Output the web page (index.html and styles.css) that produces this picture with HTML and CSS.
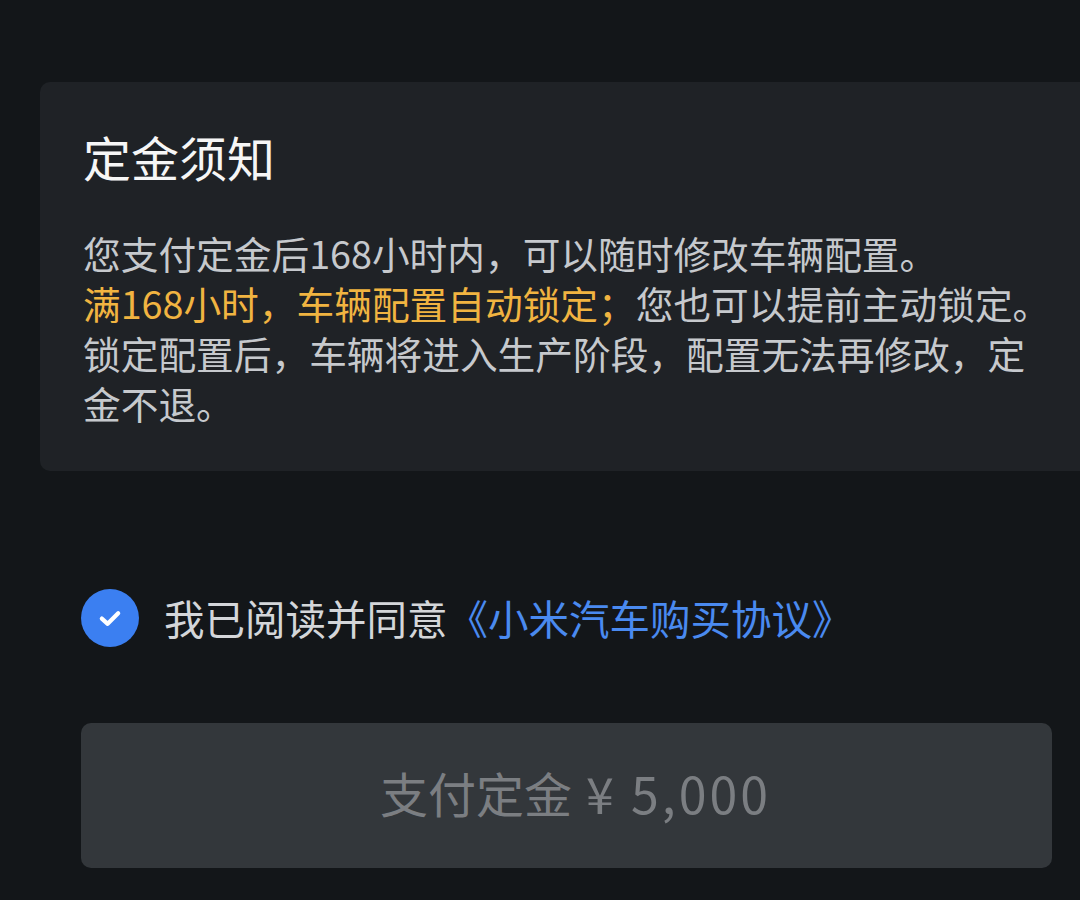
FILE: index.html
```html
<!DOCTYPE html>
<html lang="zh-CN">
<head>
<meta charset="utf-8">
<link rel="stylesheet" href="styles.css">
</head>
<body>
<div class="page">
  <section class="card">
    <h1 class="title">定金须知</h1>
    <p class="notice">您支付定金后168小时内，可以随时修改车辆配置。<br><span class="hl">满168小时，车辆配置自动锁定；</span>您也可以提前主动锁定。<br>锁定配置后，车辆将进入生产阶段，配置无法再修改，定金不退。</p>
  </section>
  <div class="agree">
    <span class="check">
      <svg class="tick" width="28" height="28" viewBox="0 0 24 24"><path d="M5 12.5 L10 17 L19 8" fill="none" stroke="#fff" stroke-width="3.6" stroke-linecap="round" stroke-linejoin="round"/></svg>
    </span>
    <span class="agree-text">我已阅读并同意<span class="link">《小米汽车购买协议》</span></span>
  </div>
  <div class="pay"><span class="pay-label">支付定金</span><span class="pay-amount">¥ 5,000</span></div>
</div>
</body>
</html>
```
FILE: styles.css
```css
html, body {
  margin: 0;
  padding: 0;
  background: #131619;
  overflow: hidden;
  width: 1080px;
  height: 900px;
}
body {
  font-family: "Noto Sans CJK SC", "Noto Sans", sans-serif;
}
.page {
  padding: 82px 0 0 40px;
}
.card {
  background: #1f2226;
  border-radius: 10px 0 0 10px;
  margin-right: -20px;
  padding: 43px 0 43px 43px;
}
.title {
  margin: 0;
  font-size: 48px;
  line-height: 62px;
  font-weight: 400;
  color: #f6f6f6;
}
.notice {
  margin: 41px 0 0 0;
  width: 975px;
  font-size: 37.7px;
  line-height: 50px;
  color: #c6c9cd;
}
.hl {
  color: #f1b441;
}
.agree {
  display: flex;
  align-items: center;
  margin: 118px 0 0 41px;
  height: 58px;
}
.check {
  width: 58px;
  height: 58px;
  border-radius: 50%;
  background: #3b7ff1;
  display: flex;
  align-items: center;
  justify-content: center;
  flex: none;
}
.tick {
  display: block;
  width: 28px;
  height: 28px;
}
.agree-text {
  margin-left: 25px;
  font-size: 40.5px;
  line-height: 58px;
  color: #d4d6d9;
}
.link {
  color: #4a8af0;
}
.pay {
  margin: 76px 28px 0 41px;
  height: 145px;
  box-sizing: border-box;
  padding: 0 0 8px 18px;
  border-radius: 10px;
  background: #33373b;
  color: #7b7e82;
  font-size: 48px;
  display: flex;
  align-items: center;
  justify-content: center;
}
.pay-amount {
  margin-left: 14px;
  font-size: 50px;
  letter-spacing: 3px;
}
```
